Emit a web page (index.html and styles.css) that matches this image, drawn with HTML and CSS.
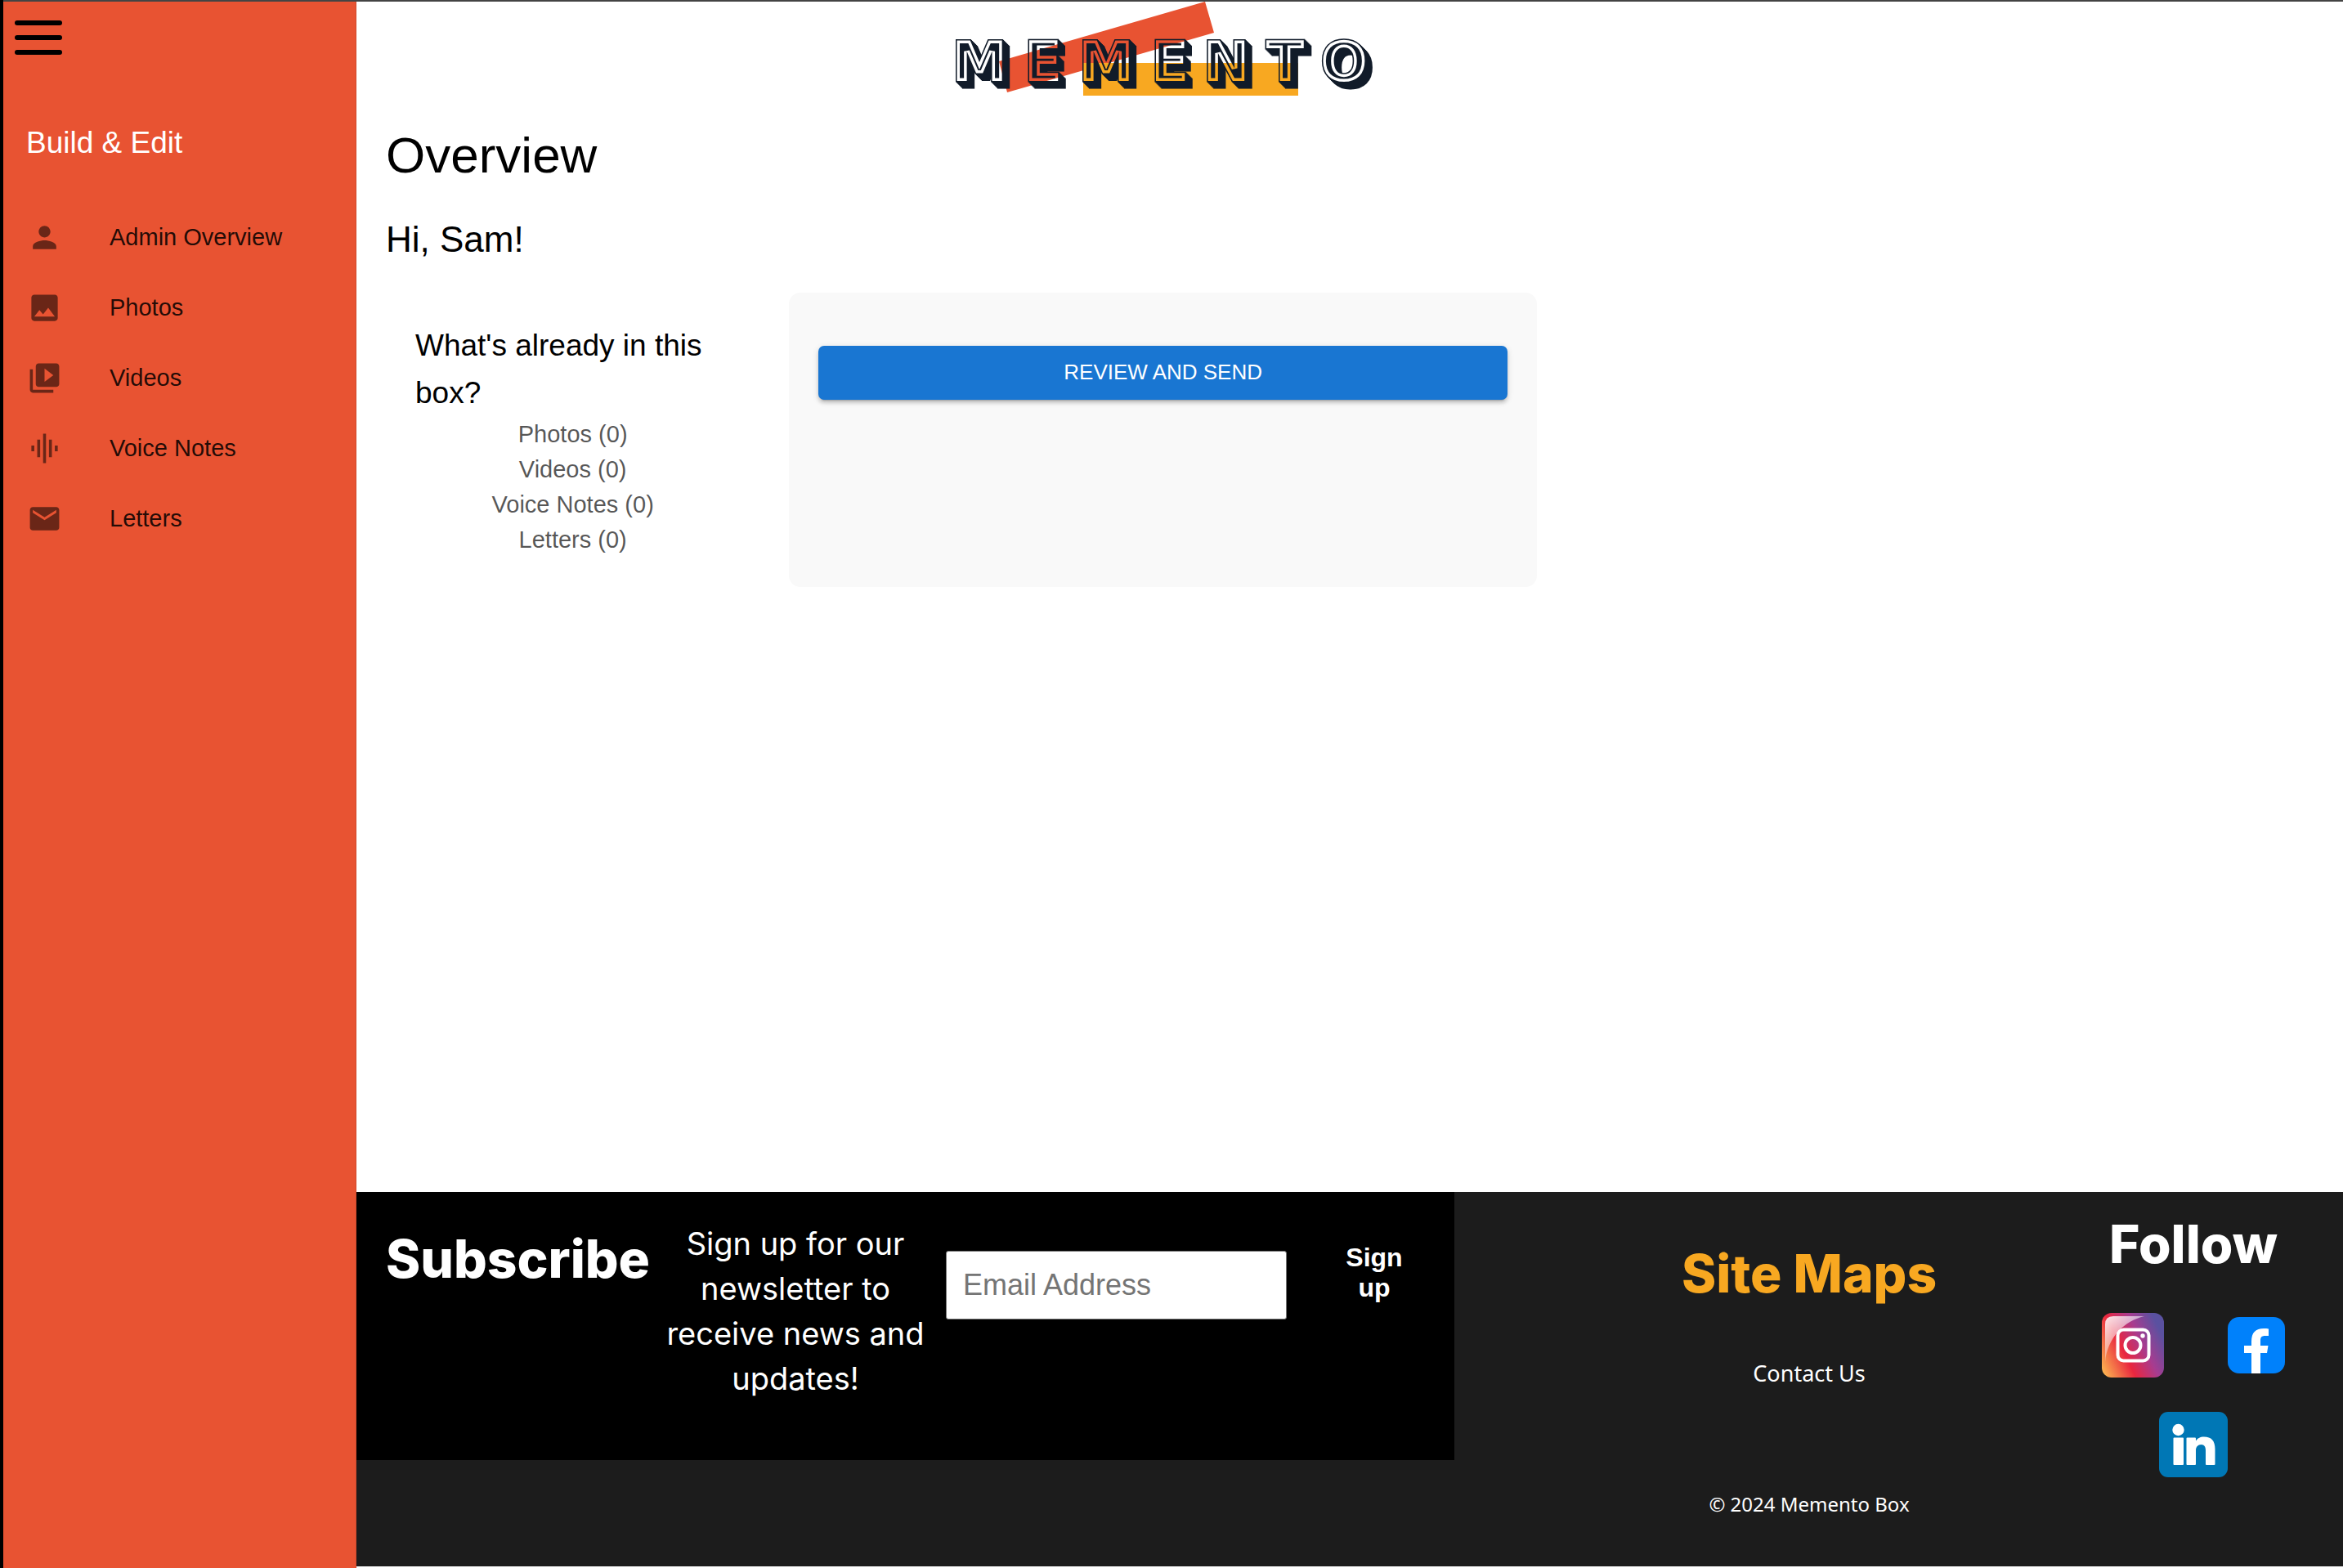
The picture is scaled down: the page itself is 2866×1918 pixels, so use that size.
FILE: index.html
```html
<!DOCTYPE html>
<html lang="en">
<head>
  <meta charset="utf-8">
  <meta name="viewport" content="width=device-width, initial-scale=1">
  <title>Memento Box – Overview</title>
  <link rel="stylesheet" href="styles.css">
</head>
<body>
  <div class="app">
    <aside class="sidebar">
      <button class="menu-toggle" type="button" aria-label="Toggle menu">
        <span class="menu-bar"></span>
        <span class="menu-bar"></span>
        <span class="menu-bar"></span>
      </button>
      <h2 class="sidebar-title">Build &amp; Edit</h2>
      <nav>
        <ul class="nav-list">
          <li><a class="nav-link" href="#admin">
            <svg class="nav-icon" viewBox="0 0 24 24" aria-hidden="true"><path d="M12 12c2.21 0 4-1.79 4-4s-1.79-4-4-4-4 1.790-4 4 1.790 4 4 4zm0 2c-2.670 0-8 1.340-8 4v2h16v-2c0-2.660-5.330-4-8-4z"/></svg>
            Admin Overview</a></li>
          <li><a class="nav-link" href="#photos">
            <svg class="nav-icon" viewBox="0 0 24 24" aria-hidden="true"><path d="M21 19V5c0-1.100-.9-2-2-2H5c-1.100 0-2 .9-2 2v14c0 1.100.9 2 2 2h14c1.100 0 2-.9 2-2zM8.500 13.500l2.500 3.010L14.500 12l4.500 6H5l3.500-4.500z"/></svg>
            Photos</a></li>
          <li><a class="nav-link" href="#videos">
            <svg class="nav-icon" viewBox="0 0 24 24" aria-hidden="true"><path d="M4 6H2v14c0 1.100.9 2 2 2h14v-2H4V6zm16-4H8c-1.100 0-2 .9-2 2v12c0 1.100.9 2 2 2h12c1.100 0 2-.9 2-2V4c0-1.100-.9-2-2-2zm-8 12.500v-9l6 4.500-6 4.500z"/></svg>
            Videos</a></li>
          <li><a class="nav-link" href="#voice-notes">
            <svg class="nav-icon" viewBox="0 0 24 24" aria-hidden="true"><path d="M7 18h2V6H7v12zm4 4h2V2h-2v20zm-8-8h2v-4H3v4zm12 4h2V6h-2v12zm4-8v4h2v-4h-2z"/></svg>
            Voice Notes</a></li>
          <li><a class="nav-link" href="#letters">
            <svg class="nav-icon" viewBox="0 0 24 24" aria-hidden="true"><path d="M20 4H4c-1.100 0-1.990.9-1.990 2L2 18c0 1.100.9 2 2 2h16c1.100 0 2-.9 2-2V6c0-1.100-.9-2-2-2zm0 4l-8 5-8-5V6l8 5 8-5v2z"/></svg>
            Letters</a></li>
        </ul>
      </nav>
    </aside>

    <div class="page">
      <header class="header">
        <svg class="logo" viewBox="0 0 550 128" role="img" aria-label="Memento">
          <defs>
            <text id="word" class="logo-word" y="97" x="48 126 203 281 350 422 494">MEMENTO</text>
            <clipPath id="face"><use href="#word"/></clipPath>
            <mask id="ink" maskUnits="userSpaceOnUse" x="0" y="0" width="550" height="128">
              <g fill="#fff" stroke="#fff" stroke-width="3">
                <use href="#word"/>
                <use href="#word" x="1" y="1"/>
                <use href="#word" x="2" y="2"/>
                <use href="#word" x="3" y="3"/>
                <use href="#word" x="4" y="4"/>
                <use href="#word" x="5" y="5"/>
                <use href="#word" x="6" y="6"/>
                <use href="#word" x="7" y="7"/>
                <use href="#word" x="8" y="8"/>
              </g>
              <g clip-path="url(#face)">
                <use href="#word" fill="#fff" stroke="#000" stroke-width="7"/>
              </g>
            </mask>
          </defs>
          <path fill="#e85332" d="M324 0l11 38L82 111 72 73z"/>
          <path fill="#f8a821" d="M175 75h263v40H175z"/>
          <rect width="550" height="128" fill="#111b29" mask="url(#ink)"/>
        </svg>
      </header>

      <main class="content">
        <h1 class="title">Overview</h1>
        <p class="greeting">Hi, Sam!</p>
        <div class="cards">
          <section class="card">
            <h2 class="card-title">What's already in this box?</h2>
            <ul class="counts">
              <li>Photos (0)</li>
              <li>Videos (0)</li>
              <li>Voice Notes (0)</li>
              <li>Letters (0)</li>
            </ul>
          </section>
          <section class="card card-action">
            <button class="review" type="button">REVIEW AND SEND</button>
          </section>
        </div>
      </main>

      <footer class="footer">
        <form class="subscribe">
          <h2 class="footer-title">Subscribe</h2>
          <p class="pitch">Sign up for our newsletter to receive news and updates!</p>
          <div class="email-cell">
            <input class="email" type="email" placeholder="Email Address" aria-label="Email Address">
          </div>
          <button class="signup" type="submit">Sign up</button>
        </form>
        <div class="sitemap">
          <h2 class="footer-title accent">Site Maps</h2>
          <a class="contact" href="#contact">Contact Us</a>
          <p class="copyright">© 2024 Memento Box</p>
        </div>
        <div class="follow">
          <h2 class="footer-title">Follow</h2>
          <div class="social">
            <a href="#instagram" aria-label="Instagram">
              <svg class="instagram" viewBox="0 0 76 79">
                <defs>
                  <linearGradient id="ig" x1="0" y1="0.9" x2="1" y2="0.4">
                    <stop offset="0" stop-color="#fcb550"/>
                    <stop offset="0.400" stop-color="#e9263f"/>
                    <stop offset="0.700" stop-color="#a73c90"/>
                    <stop offset="1" stop-color="#5a51a0"/>
                  </linearGradient>
                  <linearGradient id="gloss" x1="0" y1="0" x2="0.600" y2="0.900">
                    <stop offset="0" stop-color="#fff" stop-opacity="0.9"/>
                    <stop offset="1" stop-color="#fff" stop-opacity="0.150"/>
                  </linearGradient>
                </defs>
                <rect width="76" height="79" rx="12" fill="url(#ig)"/>
                <path fill="url(#gloss)" d="M4 60V14Q4 4 14 4h38C27 10 7 30 4 60z"/>
                <rect x="19.500" y="20.500" width="38" height="38" rx="7" fill="none" stroke="#fff" stroke-width="4"/>
                <circle cx="38" cy="39.500" r="9.500" fill="none" stroke="#fff" stroke-width="4"/>
                <circle cx="50" cy="28" r="2.700" fill="#fff"/>
              </svg>
            </a>
            <a href="#facebook" aria-label="Facebook">
              <svg class="facebook" viewBox="0 0 70 69">
                <rect width="70" height="69" rx="14" fill="#0081fb"/>
                <path fill="#fff" d="M29 69V44h-9v-9h9v-5c0-11 5-16 15-16 3 0 4 0 6 .5V23h-4c-5 0-6 2-6 6v6h9.500L48 44h-8v25z"/>
              </svg>
            </a>
            <a href="#linkedin" aria-label="LinkedIn">
              <svg class="linkedin" viewBox="0 0 84 80">
                <rect width="84" height="80" rx="11" fill="#0077b5"/>
                <circle cx="23.500" cy="22" r="7.200" fill="#fff"/>
                <path fill="#fff" d="M18.500 31.500h10.500q1 0 1 1v31.500q0 1-1 1H18.500q-1 0-1-1V32.500q0-1 1-1zM34.500 31.500h9.500q1 0 1 1v3c2-3 5-5 10-5 9 0 13.500 5 13.500 15v18.500q0 1-1 1H58q-1 0-1-1V47c0-4-1.500-7-5.500-7S45 43 45 47v17q0 1-1 1h-9.500q-1 0-1-1V32.500q0-1 1-1z"/>
              </svg>
            </a>
          </div>
        </div>
      </footer>
    </div>
  </div>
</body>
</html>
```
FILE: styles.css
```css
* {
  box-sizing: border-box;
}

body {
  margin: 0;
  border-left: 4px solid #000;
  background: #fff;
  color: #000;
  font-family: "Liberation Sans", Arial, sans-serif;
}

h1,
h2,
p,
ul {
  margin: 0;
  padding: 0;
  font-weight: 400;
}

ul {
  list-style: none;
}

button {
  border: 0;
  cursor: pointer;
  font-family: inherit;
}

.app {
  display: grid;
  grid-template-columns: 432px minmax(0, 1fr);
  min-height: 100vh;
  border-top: 2px solid #444;
}

/* Sidebar */

.sidebar {
  padding-top: 23px;
  border-right: 1px solid #cf4a2c;
  background: #e85332;
}

.menu-toggle {
  display: flex;
  flex-direction: column;
  gap: 12px;
  width: 58px;
  margin-left: 14px;
  padding: 0;
  background: none;
}

.menu-bar {
  height: 6px;
  border-radius: 3px;
  background: #000;
}

.sidebar-title {
  margin: 79px 0 43px 28px;
  color: #fff;
  font-size: 37px;
  line-height: 58px;
}

.nav-link {
  display: flex;
  align-items: center;
  gap: 58px;
  height: 86px;
  padding-left: 29px;
  color: rgba(0, 0, 0, 0.87);
  font-size: 29px;
  text-decoration: none;
}

.nav-icon {
  width: 43px;
  height: 43px;
  fill: rgba(0, 0, 0, 0.54);
}

/* Page */

.page {
  display: flex;
  flex-direction: column;
  padding-bottom: 2px;
}

.header {
  padding-left: 29.4%;
}

.logo {
  display: block;
  width: 550px;
  height: 128px;
}

.logo-word {
  font-family: "DejaVu Sans", sans-serif;
  font-size: 68px;
  font-weight: 700;
  text-anchor: middle;
}

.content {
  max-width: 1480px;
  padding: 22px 36px 36px;
}

.title {
  margin-bottom: 36px;
  font-size: 62px;
  line-height: 76px;
}

.greeting {
  margin-bottom: 36px;
  font-size: 44px;
  line-height: 58px;
}

.cards {
  display: grid;
  grid-template-columns: 1fr 2fr;
  gap: 36px;
}

.card {
  padding: 36px;
}

.card-title {
  font-size: 37px;
  line-height: 58px;
}

.counts {
  color: rgba(0, 0, 0, 0.67);
  font-size: 29px;
  line-height: 43px;
  text-align: center;
}

.card-action {
  padding-top: 65px;
  border-radius: 14px;
  background: #f9f9f9;
}

.review {
  width: 100%;
  height: 66px;
  padding: 0 0 2px;
  border-radius: 7px;
  background: #1976d2;
  box-shadow:
    0 5px 2px -4px rgba(0, 0, 0, 0.2),
    0 4px 4px 0 rgba(0, 0, 0, 0.14),
    0 2px 9px 0 rgba(0, 0, 0, 0.12);
  color: #fff;
  font-size: 26px;
}

/* Footer */

.footer {
  display: grid;
  grid-template-columns: 1343fr 727fr 360fr;
  margin-top: auto;
  background: #1c1c1c;
  color: #fff;
}

.footer-title {
  font-family: Inter, sans-serif;
  font-size: 64px;
  font-weight: 800;
  line-height: 77px;
}

.accent {
  color: #f8a821;
}

.subscribe {
  display: grid;
  grid-template-columns: minmax(0, 324fr) minmax(0, 350fr) minmax(0, 428fr) minmax(0, 178fr);
  align-items: start;
  align-self: start;
  min-height: 328px;
  padding: 36px 27px 36px 36px;
  background: #000;
}

.subscribe .footer-title {
  padding-top: 7px;
}

.pitch {
  padding: 0 8px 0 12px;
  font-family: Inter, sans-serif;
  font-size: 38px;
  line-height: 55px;
  text-align: center;
}

.email-cell {
  padding: 36px 0 0 11px;
}

.email {
  display: block;
  width: 100%;
  height: 84px;
  padding: 0 20px;
  border: 1px solid #767676;
  border-radius: 3px;
  background: #fff;
  font-family: inherit;
  font-size: 36px;
}

.email::placeholder {
  color: #757575;
}

.signup {
  justify-self: end;
  width: 142px;
  padding: 26px 30px;
  background: none;
  color: #fff;
  font-size: 32px;
  font-weight: 700;
  line-height: 37px;
}

.sitemap {
  display: flex;
  flex-direction: column;
  align-items: center;
  padding: 61px 0 58px 141px;
  font-family: "Noto Sans", sans-serif;
}

.contact {
  margin: 64px 0 122px;
  color: #fff;
  font-size: 27px;
  line-height: 40px;
  text-decoration: none;
}

.copyright {
  font-size: 24px;
  line-height: 36px;
}

.follow {
  padding: 25px 6px 0 0;
  text-align: center;
}

.social {
  display: flex;
  flex-wrap: wrap;
  align-items: center;
  justify-content: center;
  gap: 42px 78px;
  padding: 46px 56px 0;
}

.social svg {
  display: block;
}

.instagram {
  width: 76px;
  height: 79px;
}

.facebook {
  width: 70px;
  height: 69px;
}

.linkedin {
  width: 84px;
  height: 80px;
}
```
